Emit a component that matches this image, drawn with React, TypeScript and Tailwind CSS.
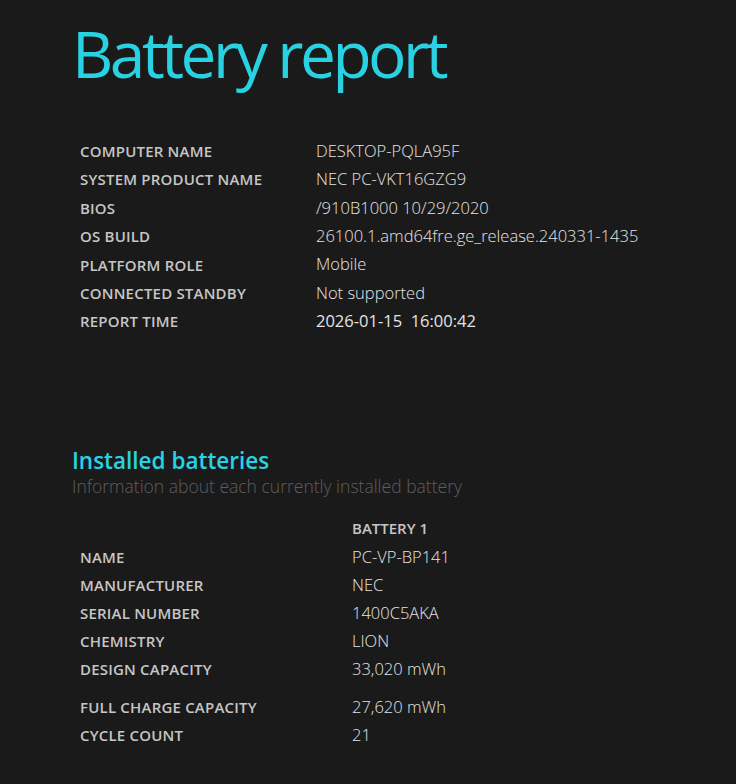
import React from "react";

const sysRows: [string, string][] = [
  ["COMPUTER NAME", "DESKTOP-PQLA95F"],
  ["SYSTEM PRODUCT NAME", "NEC PC-VKT16GZG9"],
  ["BIOS", "/910B1000 10/29/2020"],
  ["OS BUILD", "26100.1.amd64fre.ge_release.240331-1435"],
  ["PLATFORM ROLE", "Mobile"],
  ["CONNECTED STANDBY", "Not supported"],
  ["REPORT TIME", "2026-01-15  16:00:42"],
];

const batRows: [string, string, boolean][] = [
  ["NAME", "PC-VP-BP141", false],
  ["MANUFACTURER", "NEC", false],
  ["SERIAL NUMBER", "1400C5AKA", false],
  ["CHEMISTRY", "LION", false],
  ["DESIGN CAPACITY", "33,020 mWh", false],
  ["FULL CHARGE CAPACITY", "27,620 mWh", true],
  ["CYCLE COUNT", "21", false],
];

export default function App() {
  return (
    <div
      className="w-[736px] h-[784px] bg-[#1a1a1a] overflow-hidden"
      style={{ fontFamily: '"Open Sans", "Noto Sans", sans-serif' }}
    >
      <div className="pl-[72px] pt-[14px]">
        <h1 className="text-[64px] leading-[80px] font-normal text-[#29d2e2] tracking-[-3.5px]">
          Battery report
        </h1>
      </div>
      <div className="pl-[80px] pt-[43px]">
        {sysRows.map(([k, v]) => (
          <div key={k} className="flex h-[28.4px] items-center">
            <div className="w-[236px] text-[15px] font-semibold text-[#c6c6c6] tracking-[0.2px]">{k}</div>
            <div
              className={`text-[16.5px] text-[#e4e4e4] whitespace-pre ${
                k === "REPORT TIME" ? "font-normal" : "font-light"
              }`}
            >
              {v}
            </div>
          </div>
        ))}
      </div>
      <div className="pl-[72px] pt-[111px]">
        <div className="text-[22.5px] leading-[28px] font-semibold text-[#29d2e2]">Installed batteries</div>
        <div className="text-[17.5px] leading-[22px] font-light text-[#5e5e5e]">
          Information about each currently installed battery
        </div>
      </div>
      <div className="pl-[80px] pt-[17px]">
        <div className="flex h-[30px] items-center">
          <div className="w-[272px]" />
          <div className="text-[15px] font-semibold text-[#c6c6c6]">BATTERY 1</div>
        </div>
        {batRows.map(([k, v, extra]) => (
          <div key={k} className={`flex items-center ${extra ? "h-[28px] mt-[10px]" : "h-[28px]"}`}>
            <div className="w-[272px] text-[15px] font-semibold text-[#c6c6c6] tracking-[0.2px]">{k}</div>
            <div className="text-[16.5px] font-light text-[#e4e4e4]">{v}</div>
          </div>
        ))}
      </div>
    </div>
  );
}
